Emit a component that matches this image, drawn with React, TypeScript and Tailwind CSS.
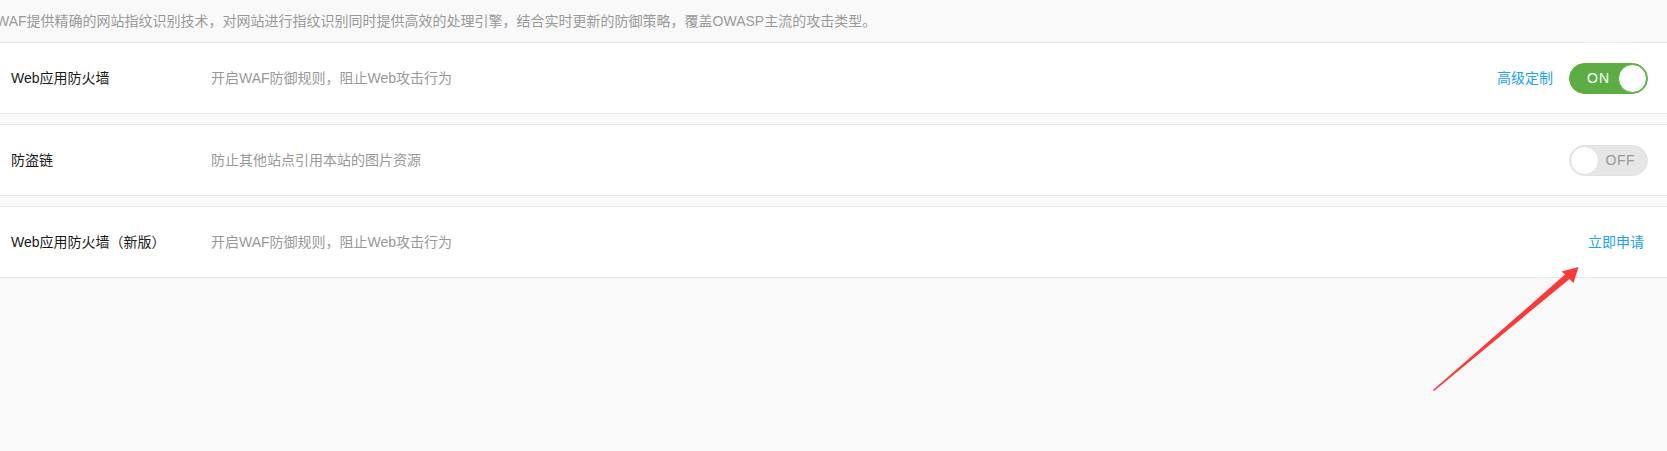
import React, { useState } from 'react'

const font = { fontFamily: '"Liberation Sans", Arial, "Noto Sans CJK SC", sans-serif' }

interface ToggleProps {
  on: boolean
  onChange: (v: boolean) => void
}

function Toggle({ on, onChange }: ToggleProps) {
  if (on) {
    return (
      <button
        onClick={() => onChange(false)}
        className="relative flex h-[31px] w-[79px] items-center rounded-full border border-[#5cad44] bg-[#5cad44] pl-[17px]"
      >
        <span className="text-[14px] tracking-[1px] text-white">ON</span>
        <span className="absolute right-0 top-0 h-[29px] w-[29px] rounded-full border border-[#5cad44] bg-white" />
      </button>
    )
  }
  return (
    <button
      onClick={() => onChange(true)}
      className="relative flex h-[31px] w-[79px] items-center justify-end rounded-full border border-[#e2e2e2] bg-[#e6e6e6] pr-[12px]"
    >
      <span className="text-[14px] tracking-[0.5px] text-[#999]">OFF</span>
      <span className="absolute left-0 top-0 h-[29px] w-[29px] rounded-full border border-[#e0e0e0] bg-white" />
    </button>
  )
}

interface RowProps {
  title: string
  desc: string
  children: React.ReactNode
}

function Row({ title, desc, children }: RowProps) {
  return (
    <div className="flex h-[72px] items-center border-y border-[#e8e8e8] bg-white pl-[11px] pr-[19px]">
      <div className="w-[200px] shrink-0 text-[14px] text-[#1a1a1a]">{title}</div>
      <div className="text-[14px] text-[#999]">{desc}</div>
      <div className="ml-auto flex items-center gap-4">{children}</div>
    </div>
  )
}

export default function App() {
  const [waf, setWaf] = useState(true)
  const [hotlink, setHotlink] = useState(false)

  return (
    <div className="relative min-h-screen overflow-hidden bg-[#f9f9f9]" style={font}>
      <div className="flex h-[42px] items-center whitespace-nowrap pl-0 text-[14px] text-[#999]">
        <span className="-ml-[4px]">
          WAF提供精确的网站指纹识别技术，对网站进行指纹识别同时提供高效的处理引擎，结合实时更新的防御策略，覆盖OWASP主流的攻击类型。
        </span>
      </div>

      <div className="flex flex-col gap-[10px]">
        <Row title="Web应用防火墙" desc="开启WAF防御规则，阻止Web攻击行为">
          <a href="#" className="text-[14px] text-[#20a0ff]">
            高级定制
          </a>
          <Toggle on={waf} onChange={setWaf} />
        </Row>
        <Row title="防盗链" desc="防止其他站点引用本站的图片资源">
          <Toggle on={hotlink} onChange={setHotlink} />
        </Row>
        <Row title="Web应用防火墙（新版）" desc="开启WAF防御规则，阻止Web攻击行为">
          <a href="#" className="mr-1 text-[14px] text-[#20a0ff]">
            立即申请
          </a>
        </Row>
      </div>

      {/* annotation arrow */}
      <svg
        className="pointer-events-none absolute left-0 top-0"
        width="1667"
        height="451"
        viewBox="0 0 1667 451"
      >
        <polygon
          points="1433,390 1565,274.5 1561.5,271.5 1578.5,267 1573.5,283 1569.5,279 1434,391"
          fill="#f83a3a"
        />
      </svg>
    </div>
  )
}
